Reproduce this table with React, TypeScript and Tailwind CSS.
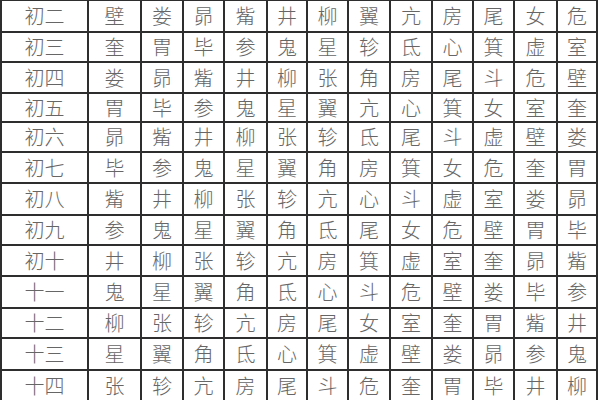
import { Fragment } from "react";

const rows: [string, string[]][] = [
  ["初二", ["壁", "娄", "昴", "觜", "井", "柳", "翼", "亢", "房", "尾", "女", "危"]],
  ["初三", ["奎", "胃", "毕", "参", "鬼", "星", "轸", "氐", "心", "箕", "虚", "室"]],
  ["初四", ["娄", "昴", "觜", "井", "柳", "张", "角", "房", "尾", "斗", "危", "壁"]],
  ["初五", ["胃", "毕", "参", "鬼", "星", "翼", "亢", "心", "箕", "女", "室", "奎"]],
  ["初六", ["昴", "觜", "井", "柳", "张", "轸", "氐", "尾", "斗", "虚", "壁", "娄"]],
  ["初七", ["毕", "参", "鬼", "星", "翼", "角", "房", "箕", "女", "危", "奎", "胃"]],
  ["初八", ["觜", "井", "柳", "张", "轸", "亢", "心", "斗", "虚", "室", "娄", "昴"]],
  ["初九", ["参", "鬼", "星", "翼", "角", "氐", "尾", "女", "危", "壁", "胃", "毕"]],
  ["初十", ["井", "柳", "张", "轸", "亢", "房", "箕", "虚", "室", "奎", "昴", "觜"]],
  ["十一", ["鬼", "星", "翼", "角", "氐", "心", "斗", "危", "壁", "娄", "毕", "参"]],
  ["十二", ["柳", "张", "轸", "亢", "房", "尾", "女", "室", "奎", "胃", "觜", "井"]],
  ["十三", ["星", "翼", "角", "氐", "心", "箕", "虚", "壁", "娄", "昴", "参", "鬼"]],
  ["十四", ["张", "轸", "亢", "房", "尾", "斗", "危", "奎", "胃", "毕", "井", "柳"]],
];

export default function App() {
  return (
    <div className="w-[600px] h-[400px] overflow-hidden bg-white font-['Noto_Sans_CJK_SC',sans-serif]">
      <div className="w-[598px] mt-[-1px] bg-[#2e2e2e] p-[2px] grid gap-[2px] grid-cols-[85px_51px_40px_39px_41px_38px_39px_40px_40px_39px_39px_41px_38px] grid-rows-[30px_28px_29px_27px_28px_29px_30px_28px_29px_30px_28px_30px_30px]">
        {rows.map(([label, cells]) => (
          <Fragment key={label}>
            <div className="bg-white flex items-center justify-center text-[20px] font-light text-[#666]">
              {label}
            </div>
            {cells.map((c, i) => (
              <div key={i} className="bg-white flex items-center justify-center text-[20px] font-light text-[#666]">
                {c}
              </div>
            ))}
          </Fragment>
        ))}
      </div>
    </div>
  );
}
